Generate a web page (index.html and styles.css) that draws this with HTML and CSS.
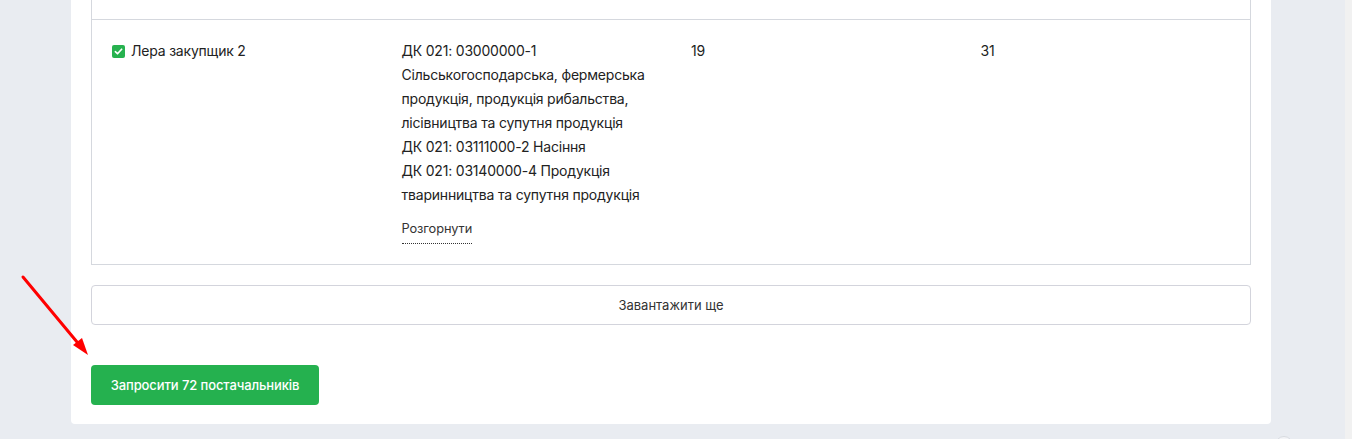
FILE: index.html
```html
<!DOCTYPE html>
<html lang="uk">
<head>
<meta charset="utf-8">
<title>Постачальники</title>
<link rel="stylesheet" href="styles.css">
</head>
<body>
<div class="viewport">
  <main class="page">
    <section class="card">
      <div class="table">
        <div class="table-head"></div>
        <div class="row">
          <div class="cell">
            <label class="check">
              <span class="box">
                <svg width="9" height="9" viewBox="0 0 8 8"><path d="M1.2 4.2 L3.1 6 L6.8 2" fill="none" stroke="#fff" stroke-width="1.5" stroke-linecap="round" stroke-linejoin="round"/></svg>
              </span>
              <span>Лера закупщик 2</span>
            </label>
          </div>
          <div class="cell">
            <div class="desc">
              <div>ДК 021: 03000000-1 Сільськогосподарська, фермерська продукція, продукція рибальства, лісівництва та супутня продукція</div>
              <div>ДК 021: 03111000-2 Насіння</div>
              <div>ДК 021: 03140000-4 Продукція тваринництва та супутня продукція</div>
            </div>
            <a class="expand">Розгорнути</a>
          </div>
          <div class="cell">19</div>
          <div class="cell">31</div>
        </div>
      </div>
      <button class="load-more">Завантажити ще</button>
      <button class="invite">Запросити 72 постачальників</button>
    </section>
    <span class="chat-bubble"></span>
  </main>
  <div class="scrollbar"></div>
</div>
<svg class="arrow" width="100" height="100" viewBox="0 0 100 100">
  <line x1="23" y1="12" x2="82" y2="83" stroke="#ff0000" stroke-width="3" stroke-linecap="round"/>
  <polygon points="88,90 73,80 82,73" fill="#ff0000"/>
</svg>
</body>
</html>
```

FILE: styles.css
```css
* { box-sizing: border-box; }
html, body { margin: 0; height: 100%; }
body {
  font-family: Inter, "Noto Sans", Arial, sans-serif;
  color: #222;
  background: #e9ecf1;
  overflow: hidden;
}
.viewport {
  display: flex;
  height: 439px;
}
.page {
  flex: 1;
  position: relative;
  padding-left: 71px;
}
.scrollbar {
  width: 7px;
  background: #f1f1f1;
}
.card {
  width: 1200px;
  background: #fff;
  border-radius: 0 0 4px 4px;
  padding: 0 20px 19px;
}
.table {
  border: 1px solid #d5d8de;
  border-top: none;
}
.table-head {
  height: 20px;
  border-bottom: 1px solid #d5d8de;
}
.row {
  display: grid;
  grid-template-columns: repeat(4, 1fr);
  padding: 19px 0 20px;
}
.cell {
  padding: 0 20px;
  font-size: 14px;
  line-height: 24px;
  letter-spacing: -0.2px;
}
.check {
  display: flex;
  align-items: center;
  gap: 6px;
}
.box {
  width: 13px;
  height: 13px;
  border-radius: 2px;
  background: #27b24f;
  display: flex;
  align-items: center;
  justify-content: center;
}
.desc { margin-bottom: 9px; }
.expand {
  display: inline-block;
  font-size: 12.8px;
  line-height: 18px;
  letter-spacing: -0.1px;
  color: #333;
  border-bottom: 1px dotted #333;
  padding-bottom: 5px;
  cursor: pointer;
}
.load-more {
  display: block;
  width: 100%;
  height: 40px;
  margin-top: 20px;
  background: #fff;
  border: 1px solid #d3d4dc;
  border-radius: 4px;
  font-family: inherit;
  font-size: 13px;
  color: #333;
}
.invite {
  display: block;
  margin-top: 40px;
  width: 228px;
  height: 40px;
  border: none;
  border-radius: 4px;
  background: #25b14f;
  color: #fff;
  font-family: inherit;
  font-size: 13px;
  font-weight: 500;
  letter-spacing: -0.1px;
}
.chat-bubble {
  position: absolute;
  left: 1275px;
  top: 436px;
  width: 18px;
  height: 18px;
  border-radius: 50%;
  border: 1px solid #d8dbe0;
  background: #f3f4f7;
}
.arrow {
  position: absolute;
  left: 0;
  top: 265px;
}
```
